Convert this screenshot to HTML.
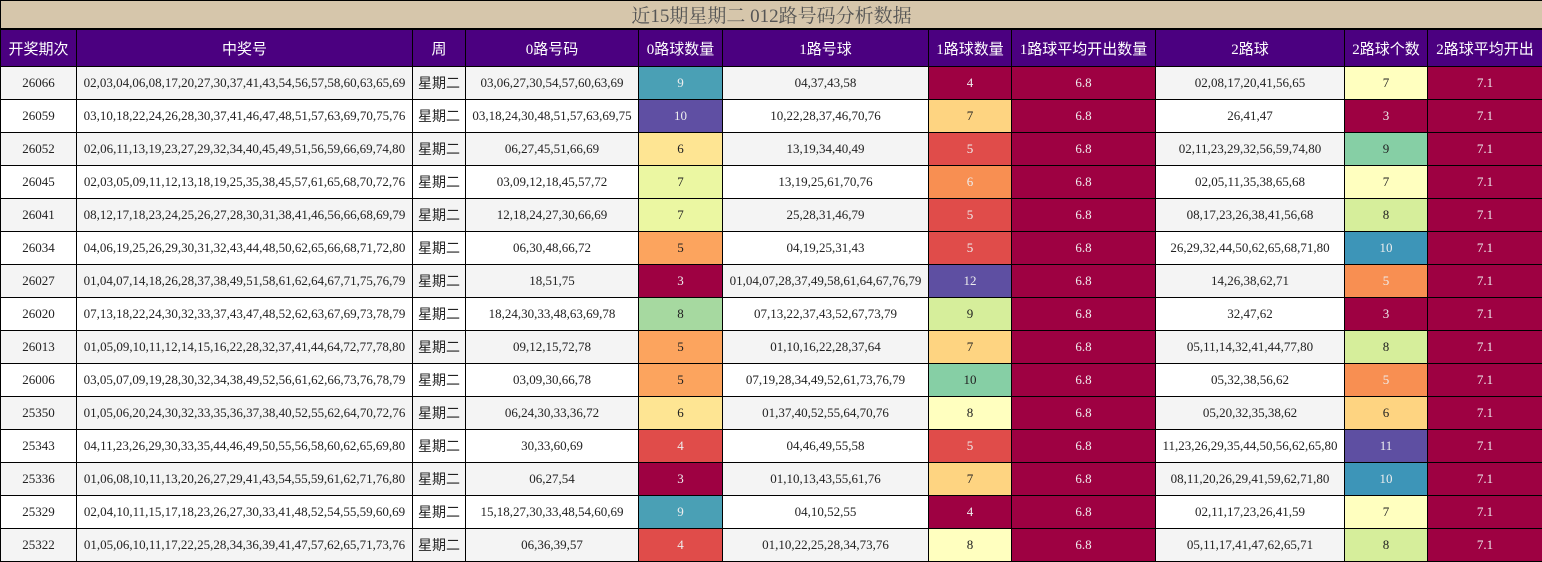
<!DOCTYPE html>
<html><head><meta charset="utf-8"><style>
body{margin:0;background:#fff;width:1542px;height:562px;overflow:hidden}
table{border-collapse:collapse;table-layout:fixed;width:1542px;font-family:"Liberation Serif","Noto Serif CJK SC",serif;font-size:13px;color:#222}
td,th{border:1px solid #000;text-align:center;padding:0;white-space:nowrap;overflow:hidden}
.t td{background:#d6c6ab;height:26px;font-size:19px;color:#555;border-bottom:2px solid #000}
th{background:#4b0080;color:#fff;font-weight:normal;font-size:15px;height:36px;font-family:"Liberation Serif","Noto Sans CJK SC",sans-serif}
tr.r td{height:32px}
tr.r:nth-child(odd) td{background:#f4f4f4}
tr.r:nth-child(even) td{background:#fff}
td.w{font-size:14px;font-family:"Liberation Sans","Noto Sans CJK SC",sans-serif}
tr.r td.c3{background:#9e0142;color:#eee}
</style></head><body>
<table>
<colgroup><col style="width:76px"><col style="width:336px"><col style="width:53px"><col style="width:173px"><col style="width:84px"><col style="width:206px"><col style="width:83px"><col style="width:144px"><col style="width:189px"><col style="width:83px"><col style="width:115px"></colgroup>
<tr class="t"><td colspan="11">近15期星期二 012路号码分析数据</td></tr>
<tr><th>开奖期次</th><th>中奖号</th><th>周</th><th>0路号码</th><th>0路球数量</th><th>1路号球</th><th>1路球数量</th><th>1路球平均开出数量</th><th>2路球</th><th>2路球个数</th><th>2路球平均开出</th></tr>
<tbody id="b"></tbody>
</table>
<script>
var d=[
["26066","02,03,04,06,08,17,20,27,30,37,41,43,54,56,57,58,60,63,65,69","03,06,27,30,54,57,60,63,69",9,"04,37,43,58",4,"02,08,17,20,41,56,65",7],
["26059","03,10,18,22,24,26,28,30,37,41,46,47,48,51,57,63,69,70,75,76","03,18,24,30,48,51,57,63,69,75",10,"10,22,28,37,46,70,76",7,"26,41,47",3],
["26052","02,06,11,13,19,23,27,29,32,34,40,45,49,51,56,59,66,69,74,80","06,27,45,51,66,69",6,"13,19,34,40,49",5,"02,11,23,29,32,56,59,74,80",9],
["26045","02,03,05,09,11,12,13,18,19,25,35,38,45,57,61,65,68,70,72,76","03,09,12,18,45,57,72",7,"13,19,25,61,70,76",6,"02,05,11,35,38,65,68",7],
["26041","08,12,17,18,23,24,25,26,27,28,30,31,38,41,46,56,66,68,69,79","12,18,24,27,30,66,69",7,"25,28,31,46,79",5,"08,17,23,26,38,41,56,68",8],
["26034","04,06,19,25,26,29,30,31,32,43,44,48,50,62,65,66,68,71,72,80","06,30,48,66,72",5,"04,19,25,31,43",5,"26,29,32,44,50,62,65,68,71,80",10],
["26027","01,04,07,14,18,26,28,37,38,49,51,58,61,62,64,67,71,75,76,79","18,51,75",3,"01,04,07,28,37,49,58,61,64,67,76,79",12,"14,26,38,62,71",5],
["26020","07,13,18,22,24,30,32,33,37,43,47,48,52,62,63,67,69,73,78,79","18,24,30,33,48,63,69,78",8,"07,13,22,37,43,52,67,73,79",9,"32,47,62",3],
["26013","01,05,09,10,11,12,14,15,16,22,28,32,37,41,44,64,72,77,78,80","09,12,15,72,78",5,"01,10,16,22,28,37,64",7,"05,11,14,32,41,44,77,80",8],
["26006","03,05,07,09,19,28,30,32,34,38,49,52,56,61,62,66,73,76,78,79","03,09,30,66,78",5,"07,19,28,34,49,52,61,73,76,79",10,"05,32,38,56,62",5],
["25350","01,05,06,20,24,30,32,33,35,36,37,38,40,52,55,62,64,70,72,76","06,24,30,33,36,72",6,"01,37,40,52,55,64,70,76",8,"05,20,32,35,38,62",6],
["25343","04,11,23,26,29,30,33,35,44,46,49,50,55,56,58,60,62,65,69,80","30,33,60,69",4,"04,46,49,55,58",5,"11,23,26,29,35,44,50,56,62,65,80",11],
["25336","01,06,08,10,11,13,20,26,27,29,41,43,54,55,59,61,62,71,76,80","06,27,54",3,"01,10,13,43,55,61,76",7,"08,11,20,26,29,41,59,62,71,80",10],
["25329","02,04,10,11,15,17,18,23,26,27,30,33,41,48,52,54,55,59,60,69","15,18,27,30,33,48,54,60,69",9,"04,10,52,55",4,"02,11,17,23,26,41,59",7],
["25322","01,05,06,10,11,17,22,25,28,34,36,39,41,47,57,62,65,71,73,76","06,36,39,57",4,"01,10,22,25,28,34,73,76",8,"05,11,17,41,47,62,65,71",8]];
var c0={3:"#9e0142",4:"#e04c4a",5:"#fca45e",6:"#fee593",7:"#ebf7a2",8:"#a6d9a0",9:"#4aa0b5",10:"#5f4fa3"};
var c1={4:"#9e0142",5:"#e04c4a",6:"#f88f52",7:"#fed481",8:"#ffffbf",9:"#d6ee9b",10:"#86cfa5",12:"#5e4fa2"};
var c2={3:"#9e0142",5:"#f88f52",6:"#fed481",7:"#ffffbf",8:"#d6ee9b",9:"#86cfa5",10:"#3d95b8",11:"#5e4fa2"};
var dark={"#9e0142":1,"#e04c4a":1,"#4aa0b5":1,"#5f4fa3":1,"#f88f52":1,"#5e4fa2":1,"#3d95b8":1};
function cell(v,m){var c=m[v];return '<td style="background:'+c+';color:'+(dark[c]?'#eee':'#222')+'">'+v+'</td>';}
var h="";
d.forEach(function(r){h+='<tr class="r"><td>'+r[0]+'</td><td>'+r[1]+'</td><td class="w">星期二</td><td>'+r[2]+'</td>'+cell(r[3],c0)+'<td>'+r[4]+'</td>'+cell(r[5],c1)+'<td class="c3">6.8</td><td>'+r[6]+'</td>'+cell(r[7],c2)+'<td class="c3">7.1</td></tr>';});
document.getElementById("b").innerHTML=h;
</script>
</body></html>
